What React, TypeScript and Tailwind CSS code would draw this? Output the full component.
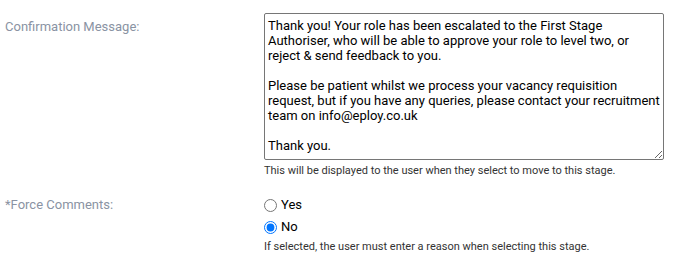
import { useState } from 'react'

const MESSAGE = `Thank you! Your role has been escalated to the First Stage Authoriser, who will be able to approve your role to level two, or reject & send feedback to you.

Please be patient whilst we process your vacancy requisition request, but if you have any queries, please contact your recruitment team on info@eploy.co.uk

Thank you.`

export default function App() {
  const [message, setMessage] = useState(MESSAGE)
  const [force, setForce] = useState<'yes' | 'no'>('no')

  return (
    <div className="min-h-screen bg-white font-['Roboto','Liberation_Sans',sans-serif] text-[13px]">
      <div className="flex pt-[13px]">
        <label className="w-[264px] pl-[5px] pt-[4px] text-[13px] text-[#8a93a3]">Confirmation Message:</label>
        <div>
          <textarea
            value={message}
            onChange={(e) => setMessage(e.target.value)}
            className="block h-[147px] w-[400px] resize-y rounded-[2px] border border-[#767676] px-[3px] pt-[4px] pb-[2px] font-['Roboto','Liberation_Sans',sans-serif] text-[13px] leading-[15px] text-black outline-none"
          />
          <p className="mt-[4px] text-[11px] leading-[13px] text-[#333]">
            This will be displayed to the user when they select to move to this stage.
          </p>
        </div>
      </div>

      <div className="mt-[17px] flex">
        <label className="w-[264px] pl-[5px] pt-[1px] text-[13px] text-[#8a93a3]">*Force Comments:</label>
        <div>
          <label className="flex h-[22px] items-center gap-[4px] text-[13px] text-black">
            <input
              type="radio"
              name="force"
              checked={force === 'yes'}
              onChange={() => setForce('yes')}
              className="m-0 h-[13px] w-[13px] accent-[#0075ff]"
            />
            Yes
          </label>
          <label className="flex h-[22px] items-center gap-[4px] text-[13px] text-black">
            <input
              type="radio"
              name="force"
              checked={force === 'no'}
              onChange={() => setForce('no')}
              className="m-0 h-[13px] w-[13px] accent-[#0075ff]"
            />
            No
          </label>
          <p className="mt-[2px] text-[11px] leading-[13px] text-[#333]">
            If selected, the user must enter a reason when selecting this stage.
          </p>
        </div>
      </div>
    </div>
  )
}
